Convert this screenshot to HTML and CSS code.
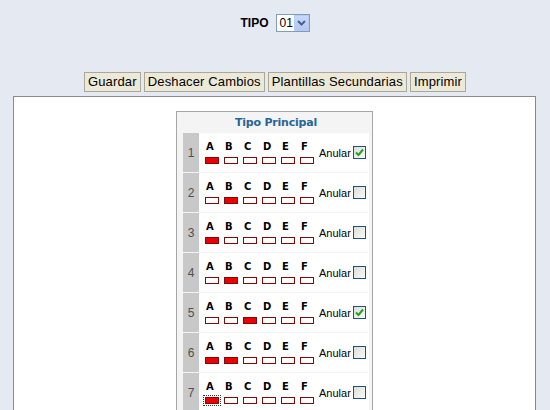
FILE: index.html
```html
<!DOCTYPE html>
<html>
<head>
<meta charset="utf-8">
<link rel="stylesheet" href="styles.css">
</head>
<body>
<div class="top">
  <span class="lbl">TIPO</span>
  <div class="sel"><span class="val">01</span><span class="arrow"><svg width="9" height="6" viewBox="0 0 9 6"><path d="M1 1 L4.5 4.5 L8 1" fill="none" stroke="#4d6185" stroke-width="2"/></svg></span></div>
</div>
<div class="bar">
  <button class="btn">Guardar</button>
  <button class="btn">Deshacer Cambios</button>
  <button class="btn">Plantillas Secundarias</button>
  <button class="btn">Imprimir</button>
</div>
<div class="panel">
  <div class="box">
    <div class="title">Tipo Principal</div>
    <div class="rows">
      <div class="row"><div class="num">1</div><div class="grid"><span>A</span><span>B</span><span>C</span><span>D</span><span>E</span><span>F</span><i class="on"></i><i></i><i></i><i></i><i></i><i></i></div><span class="anular">Anular</span><span class="chk on"><svg width="11" height="11" viewBox="0 0 11 11"><path d="M2 5.5 L4.5 8 L9 2.5" fill="none" stroke="#21a121" stroke-width="2"/></svg></span></div>
      <div class="row"><div class="num">2</div><div class="grid"><span>A</span><span>B</span><span>C</span><span>D</span><span>E</span><span>F</span><i></i><i class="on"></i><i></i><i></i><i></i><i></i></div><span class="anular">Anular</span><span class="chk"></span></div>
      <div class="row"><div class="num">3</div><div class="grid"><span>A</span><span>B</span><span>C</span><span>D</span><span>E</span><span>F</span><i class="on"></i><i></i><i></i><i></i><i></i><i></i></div><span class="anular">Anular</span><span class="chk"></span></div>
      <div class="row"><div class="num">4</div><div class="grid"><span>A</span><span>B</span><span>C</span><span>D</span><span>E</span><span>F</span><i></i><i class="on"></i><i></i><i></i><i></i><i></i></div><span class="anular">Anular</span><span class="chk"></span></div>
      <div class="row"><div class="num">5</div><div class="grid"><span>A</span><span>B</span><span>C</span><span>D</span><span>E</span><span>F</span><i></i><i></i><i class="on"></i><i></i><i></i><i></i></div><span class="anular">Anular</span><span class="chk on"><svg width="11" height="11" viewBox="0 0 11 11"><path d="M2 5.5 L4.5 8 L9 2.5" fill="none" stroke="#21a121" stroke-width="2"/></svg></span></div>
      <div class="row"><div class="num">6</div><div class="grid"><span>A</span><span>B</span><span>C</span><span>D</span><span>E</span><span>F</span><i class="on"></i><i class="on"></i><i></i><i></i><i></i><i></i></div><span class="anular">Anular</span><span class="chk"></span></div>
      <div class="row"><div class="num">7</div><div class="grid"><span>A</span><span>B</span><span>C</span><span>D</span><span>E</span><span>F</span><i class="on focus"></i><i></i><i></i><i></i><i></i><i></i></div><span class="anular">Anular</span><span class="chk"></span></div>
    </div>
  </div>
</div>
</body>
</html>
```
FILE: styles.css
```css
html, body {
  margin: 0;
  padding: 0;
  background: #e4e9f2;
  font-family: "Liberation Sans", Arial, sans-serif;
  overflow: hidden;
  height: 410px;
}
.top {
  display: flex;
  justify-content: center;
  align-items: center;
  gap: 7px;
  padding-top: 14px;
  height: 18px;
}
.lbl {
  font-size: 12px;
  font-weight: bold;
  color: #000;
}
.sel {
  width: 32px;
  height: 16px;
  border: 1px solid #7f9db9;
  background: #fff;
  display: flex;
  align-items: stretch;
}
.val {
  flex: 1;
  font-size: 12px;
  line-height: 16px;
  padding-left: 3px;
}
.arrow {
  width: 15px;
  background: linear-gradient(#c6d8fb, #b1c8f7);
  border: 1px solid #b8cbef;
  box-sizing: border-box;
  display: flex;
  align-items: center;
  justify-content: center;
}
.bar {
  display: flex;
  justify-content: center;
  gap: 3px;
  margin-top: 40px;
}
.btn {
  font-family: "Liberation Sans", Arial, sans-serif;
  font-size: 13px;
  letter-spacing: 0.15px;
  height: 20px;
  padding: 0 3px;
  margin: 0;
  background: #ece9d8;
  border: 1px solid #aca899;
  border-radius: 0;
  color: #000;
  line-height: 18px;
}
.panel {
  margin: 4px 14px 0 13px;
  border: 1px solid #8a8a8a;
  border-bottom: none;
  background: #fff;
  height: 400px;
  display: flex;
  justify-content: center;
  padding-top: 14px;
}
.box {
  width: 186px;
  height: 500px;
  border: 1px solid #a6a6a6;
  background: #f4f4f4;
  padding: 0 3px 0 6px;
}
.title {
  height: 21px;
  line-height: 22px;
  text-align: center;
  font-family: Verdana, "DejaVu Sans", sans-serif;
  font-size: 11px;
  font-weight: bold;
  color: #2a6496;
  letter-spacing: -0.2px;
}
.rows {
  display: flex;
  flex-direction: column;
  gap: 1px;
}
.row {
  height: 39px;
  display: flex;
  align-items: center;
  background: #fff;
}
.num {
  width: 16px;
  align-self: stretch;
  background: #c8c8c8;
  color: #505050;
  font-size: 12px;
  display: flex;
  align-items: center;
  justify-content: center;
}
.grid {
  display: grid;
  grid-template-columns: repeat(6, 14px);
  column-gap: 5px;
  row-gap: 6px;
  margin-left: 6px;
  margin-top: 1px;
}
.grid span {
  font-family: Verdana, "DejaVu Sans", sans-serif;
  font-size: 10px;
  font-weight: bold;
  line-height: 9px;
  height: 9px;
  padding-left: 1px;
  color: #000;
}
.grid i {
  display: block;
  width: 12px;
  height: 5px;
  border: 1px solid #7a0c0c;
  background: #fff;
}
.grid i.on {
  background: #ee0000;
}
.grid i.focus {
  outline: 1px dotted #333;
  outline-offset: 1px;
}
.anular {
  font-size: 11px;
  margin-left: 5px;
  color: #000;
}
.chk {
  width: 11px;
  height: 11px;
  border: 1px solid #1c5180;
  background: linear-gradient(135deg, #dcdcd7, #fbfbfa);
  margin-left: 2px;
  margin-top: -1px;
  display: flex;
  align-items: center;
  justify-content: center;
}
```
